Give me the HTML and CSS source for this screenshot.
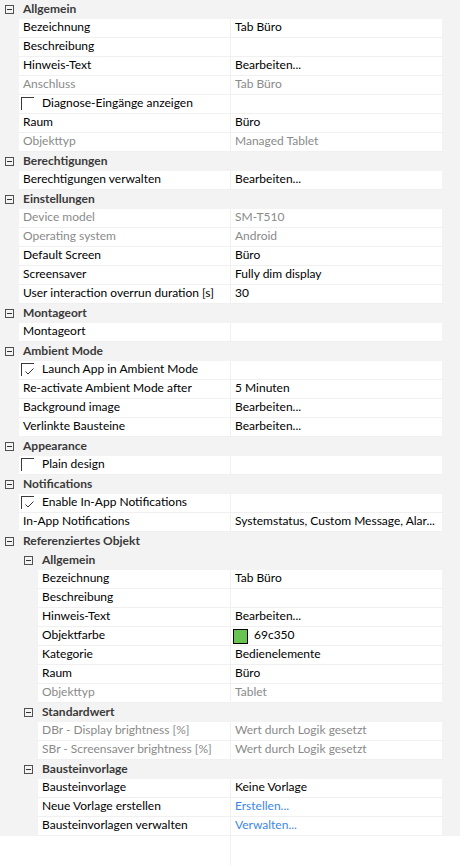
FILE: index.html
```html
<!DOCTYPE html>
<html lang="de">
<head>
<meta charset="utf-8">
<title>Eigenschaften</title>
<link rel="stylesheet" href="styles.css">
</head>
<body>
<div class="grid">
  <div class="head"><span class="tog"></span><span class="htext">Allgemein</span></div>
  <div class="row"><div class="cells"><div class="lab">Bezeichnung</div><div class="val">Tab Büro</div></div></div>
  <div class="row"><div class="cells"><div class="lab">Beschreibung</div><div class="val"></div></div></div>
  <div class="row"><div class="cells"><div class="lab">Hinweis-Text</div><div class="val">Bearbeiten...</div></div></div>
  <div class="row"><div class="cells dis"><div class="lab">Anschluss</div><div class="val">Tab Büro</div></div></div>
  <div class="row"><div class="cells"><div class="lab chk"><span class="box"></span>Diagnose-Eingänge anzeigen</div><div class="val"></div></div></div>
  <div class="row"><div class="cells"><div class="lab">Raum</div><div class="val">Büro</div></div></div>
  <div class="row"><div class="cells dis"><div class="lab">Objekttyp</div><div class="val">Managed Tablet</div></div></div>

  <div class="head"><span class="tog"></span><span class="htext">Berechtigungen</span></div>
  <div class="row"><div class="cells"><div class="lab">Berechtigungen verwalten</div><div class="val">Bearbeiten...</div></div></div>

  <div class="head"><span class="tog"></span><span class="htext">Einstellungen</span></div>
  <div class="row"><div class="cells dis"><div class="lab">Device model</div><div class="val">SM-T510</div></div></div>
  <div class="row"><div class="cells dis"><div class="lab">Operating system</div><div class="val">Android</div></div></div>
  <div class="row"><div class="cells"><div class="lab">Default Screen</div><div class="val">Büro</div></div></div>
  <div class="row"><div class="cells"><div class="lab">Screensaver</div><div class="val">Fully dim display</div></div></div>
  <div class="row"><div class="cells"><div class="lab">User interaction overrun duration [s]</div><div class="val">30</div></div></div>

  <div class="head"><span class="tog"></span><span class="htext">Montageort</span></div>
  <div class="row"><div class="cells"><div class="lab">Montageort</div><div class="val"></div></div></div>

  <div class="head"><span class="tog"></span><span class="htext">Ambient Mode</span></div>
  <div class="row"><div class="cells"><div class="lab chk"><span class="box"><svg class="tick" width="9" height="7" viewBox="0 0 9 7"><polyline points="0.5,3.5 3,6 8.5,0.5" fill="none" stroke="#333" stroke-width="1"/></svg></span>Launch App in Ambient Mode</div><div class="val"></div></div></div>
  <div class="row"><div class="cells"><div class="lab">Re-activate Ambient Mode after</div><div class="val">5 Minuten</div></div></div>
  <div class="row"><div class="cells"><div class="lab">Background image</div><div class="val">Bearbeiten...</div></div></div>
  <div class="row"><div class="cells"><div class="lab">Verlinkte Bausteine</div><div class="val">Bearbeiten...</div></div></div>

  <div class="head"><span class="tog"></span><span class="htext">Appearance</span></div>
  <div class="row"><div class="cells"><div class="lab chk"><span class="box"></span>Plain design</div><div class="val"></div></div></div>

  <div class="head"><span class="tog"></span><span class="htext">Notifications</span></div>
  <div class="row"><div class="cells"><div class="lab chk"><span class="box"><svg class="tick" width="9" height="7" viewBox="0 0 9 7"><polyline points="0.5,3.5 3,6 8.5,0.5" fill="none" stroke="#333" stroke-width="1"/></svg></span>Enable In-App Notifications</div><div class="val"></div></div></div>
  <div class="row"><div class="cells"><div class="lab">In-App Notifications</div><div class="val">Systemstatus, Custom Message, Alar...</div></div></div>

  <div class="head"><span class="tog"></span><span class="htext">Referenziertes Objekt</span></div>
  <div class="head sub"><span class="tog"></span><span class="htext">Allgemein</span></div>
  <div class="row sub"><div class="cells"><div class="lab">Bezeichnung</div><div class="val">Tab Büro</div></div></div>
  <div class="row sub"><div class="cells"><div class="lab">Beschreibung</div><div class="val"></div></div></div>
  <div class="row sub"><div class="cells"><div class="lab">Hinweis-Text</div><div class="val">Bearbeiten...</div></div></div>
  <div class="row sub"><div class="cells"><div class="lab">Objektfarbe</div><div class="val colorval"><span class="swatch"></span>69c350</div></div></div>
  <div class="row sub"><div class="cells"><div class="lab">Kategorie</div><div class="val">Bedienelemente</div></div></div>
  <div class="row sub"><div class="cells"><div class="lab">Raum</div><div class="val">Büro</div></div></div>
  <div class="row sub"><div class="cells dis"><div class="lab">Objekttyp</div><div class="val">Tablet</div></div></div>

  <div class="head sub"><span class="tog"></span><span class="htext">Standardwert</span></div>
  <div class="row sub"><div class="cells dis"><div class="lab">DBr - Display brightness [%]</div><div class="val">Wert durch Logik gesetzt</div></div></div>
  <div class="row sub"><div class="cells dis"><div class="lab">SBr - Screensaver brightness [%]</div><div class="val">Wert durch Logik gesetzt</div></div></div>

  <div class="head sub"><span class="tog"></span><span class="htext">Bausteinvorlage</span></div>
  <div class="row sub"><div class="cells"><div class="lab">Bausteinvorlage</div><div class="val">Keine Vorlage</div></div></div>
  <div class="row sub"><div class="cells"><div class="lab">Neue Vorlage erstellen</div><div class="val link">Erstellen...</div></div></div>
  <div class="row sub"><div class="cells"><div class="lab">Bausteinvorlagen verwalten</div><div class="val link">Verwalten...</div></div></div>
</div>
<div class="filler"></div>
</body>
</html>
```

FILE: styles.css
```css
html, body {
  margin: 0;
  padding: 0;
  background: #ffffff;
}
body {
  font-family: Lato, "Noto Sans", sans-serif;
  font-size: 12px;
  color: #000;
  width: 460px;
  height: 865px;
  overflow: hidden;
}
.grid {
  background: #f3f3f3;
  width: 460px;
}
.head {
  height: 19px;
  display: flex;
  align-items: center;
}
.tog {
  box-sizing: border-box;
  width: 9px;
  height: 9px;
  border: 1px solid #505050;
  margin-left: 5px;
  margin-right: 9px;
  position: relative;
  flex: none;
}
.tog::after {
  content: "";
  position: absolute;
  left: 1px;
  top: 3px;
  width: 5px;
  height: 1px;
  background: #333;
}
.sub .tog {
  margin-left: 24px;
}
.htext {
  font-weight: bold;
  color: #3a3a3a;
  line-height: 16px;
  padding-bottom: 1px;
}
.row {
  height: 19px;
  padding-left: 19px;
  width: 442px;
  box-sizing: border-box;
}
.row.sub {
  padding-left: 38px;
}
.cells {
  background: #fff;
  height: 18px;
  border-bottom: 1px solid #f0f0f0;
  display: flex;
}
.lab {
  box-sizing: border-box;
  flex: none;
  width: 212px;
  padding-left: 4px;
  line-height: 16px;
  border-right: 1px solid #f0f0f0;
  white-space: nowrap;
  overflow: hidden;
}
.row.sub .lab {
  width: 193px;
}
.val {
  flex: 1;
  min-width: 0;
  padding-left: 4px;
  line-height: 16px;
  white-space: nowrap;
  overflow: hidden;
}
.colorval {
  display: flex;
  align-items: flex-start;
}
.dis .lab, .dis .val {
  color: #8a8a8a;
}
.link {
  color: #3d87e4;
}
.chk {
  padding-left: 2px;
  display: flex;
  align-items: flex-start;
}
.box {
  box-sizing: border-box;
  width: 13px;
  height: 13px;
  margin-top: 2px;
  margin-right: 8px;
  border-top: 1px solid #3a3a3a;
  border-left: 1px solid #3a3a3a;
  flex: none;
  display: flex;
  align-items: flex-start;
}
.tick {
  margin-left: 3px;
  margin-top: 4px;
}
.swatch {
  box-sizing: border-box;
  width: 15px;
  height: 15px;
  margin-top: 2px;
  margin-left: -2px;
  margin-right: 6px;
  background: #69c350;
  border: 1px solid #000;
  flex: none;
}
.filler {
  height: 29px;
  margin-left: 230px;
  border-left: 1px solid #f0f0f0;
}
```
